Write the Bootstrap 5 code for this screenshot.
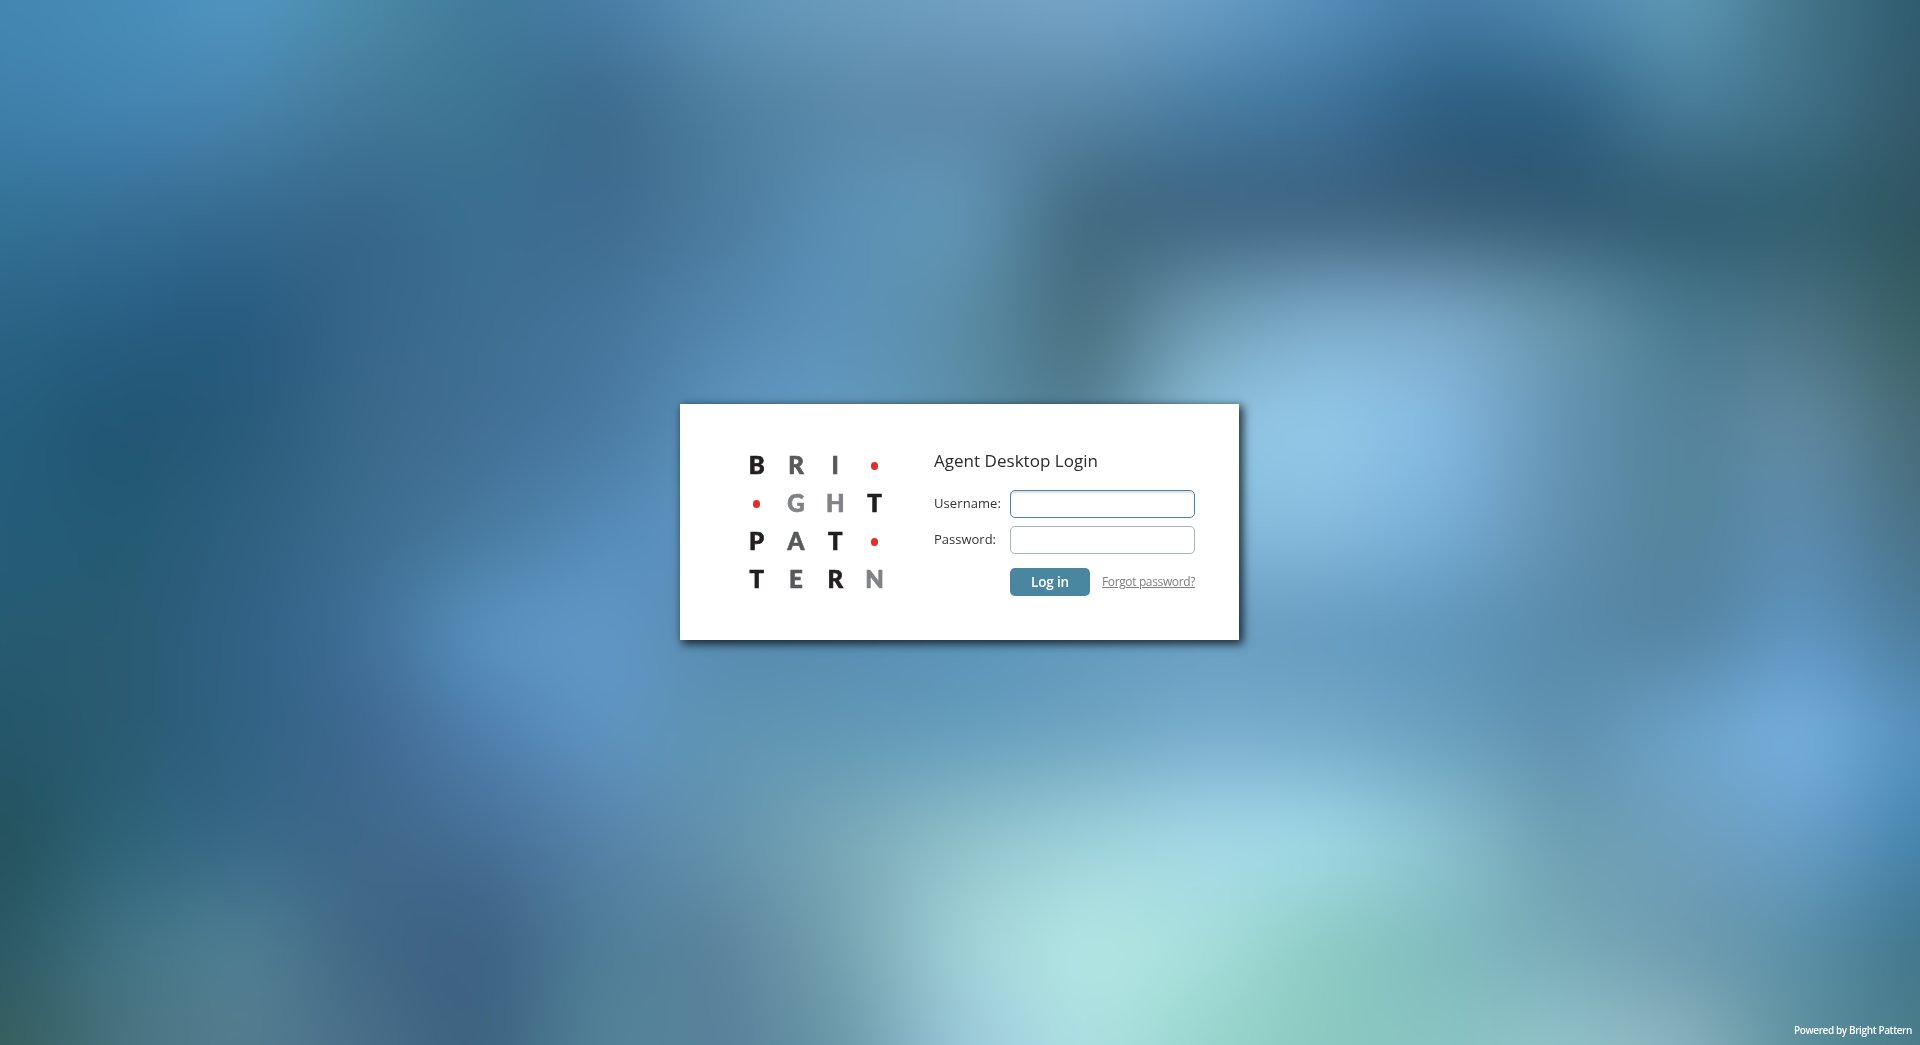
<!DOCTYPE html>
<html lang="en">
<head>
<meta charset="utf-8">
<meta name="viewport" content="width=device-width, initial-scale=1">
<title>Agent Desktop Login</title>
<link href="https://cdn.jsdelivr.net/npm/bootstrap@5.3.0/dist/css/bootstrap.min.css" rel="stylesheet">
<style>
  body { font-family: "Open Sans", sans-serif; color: #333; background: #4a7fa3; }
  /* colour field behind the whole page, one texel per 120 x 104.5 px cell */
  .backdrop { position: fixed; inset: 0; overflow: hidden; z-index: -1; }
  .backdrop canvas { position: absolute; left: -180px; top: -156.75px; width: 2280px; height: 1358.5px; filter: blur(32px); }
  .login-panel { width: 559px; height: 236px; background: #fff; box-shadow: 3px 3px 9px 1px rgba(0,0,0,.75); padding: 43px 44px 0 57px; margin: 0 1px 1px 0; }
  .logo-grid { display: grid; grid-template-columns: repeat(4, 39.3px); grid-auto-rows: 38px; font: 900 24px/36px Lato, sans-serif; text-align: center; }
  .tone-1 { color: #231f20; } .tone-2 { color: #58595b; } .tone-3 { color: #808285; }
  .logo-grid span { -webkit-text-stroke: .7px currentColor; }
  .logo-dot { width: 7.4px; height: 7.4px; border-radius: 50%; background: #de3027; place-self: center; }
  .login-form { width: 261px; }
  .form-title { font-size: 17px; line-height: 24px; margin: 2px 0 17px; font-weight: 400; white-space: nowrap; color: #2b2b2b; }
  .field-row { height: 28px; margin-bottom: 8px; }
  .field-row label { width: 76px; font-size: 13px; white-space: nowrap; }
  .field-row .form-control { width: 185px; height: 28px; border: 1px solid #a9b4bb; border-radius: 5px; padding: 2px 8px; font-size: 13px; }
  .field-row .is-current { border-color: #4b86a0; box-shadow: inset 0 2px 2px rgba(0,0,0,.13); }
  .form-actions { margin: 14px 0 0 76px; }
  .btn-login { width: 80px; height: 28px; padding: 0; border: 0; border-radius: 5px; background: #4b86a0; color: #fff; font-size: 13.5px; font-weight: 600; line-height: 27px; }
  .forgot { font-size: 12px; line-height: 16px; color: #808080; white-space: nowrap; }
  .powered { font-size: 10px; line-height: 14px; font-weight: 600; right: 8px; bottom: 8px; white-space: nowrap; }
</style>
</head>
<body class="vh-100 overflow-hidden">
<div class="backdrop"><canvas id="field" width="19" height="13"></canvas></div>

<main class="d-flex vh-100 align-items-center justify-content-center">
  <section class="login-panel d-flex justify-content-between align-items-start">
    <div class="logo-grid" aria-label="Bright Pattern">
      <span class="tone-1">B</span><span class="tone-2">R</span><span class="tone-2">I</span><span class="logo-dot"></span>
      <span class="logo-dot"></span><span class="tone-3">G</span><span class="tone-3">H</span><span class="tone-1">T</span>
      <span class="tone-1">P</span><span class="tone-2">A</span><span class="tone-1">T</span><span class="logo-dot"></span>
      <span class="tone-1">T</span><span class="tone-2">E</span><span class="tone-1">R</span><span class="tone-3">N</span>
    </div>
    <form class="login-form">
      <h1 class="form-title"><span class="fit" data-w="164">Agent Desktop Login</span></h1>
      <div class="field-row d-flex align-items-center">
        <label for="user"><span class="fit" data-w="67">Username:</span></label>
        <input id="user" type="text" class="form-control is-current">
      </div>
      <div class="field-row d-flex align-items-center">
        <label for="pass"><span class="fit" data-w="62">Password:</span></label>
        <input id="pass" type="password" class="form-control">
      </div>
      <div class="form-actions d-flex align-items-center justify-content-between">
        <button type="button" class="btn btn-login"><span class="fit" data-w="38">Log in</span></button>
        <a href="#" class="forgot"><span class="fit" data-w="93">Forgot password?</span></a>
      </div>
    </form>
  </section>
</main>
<footer class="powered position-fixed text-white"><span class="fit" data-w="118">Powered by Bright Pattern</span></footer>

<script src="https://cdn.jsdelivr.net/npm/bootstrap@5.3.0/dist/js/bootstrap.bundle.min.js"></script>
<script>
  const rows = [
    '4488b2 478db8 5297c4 4c8ca8 407b9b 4a7da8 6095b8 6b9dbe 71a1c4 78a7ca 6ca0c8 5690bb 477da8 528bb3 609bb8 447488 2d5a6d',
    '3f80aa 4586b4 4885ad 45799a 3d7593 3a688a 4e7f9f 5a88a8 5d87a8 5886a5 487ca2 3f729c 2a5b7d 2b5c7e 4b809c 41728a 34586a',
    '347397 366f96 386b90 36678a 3b6f92 3e6b90 4b7b9d 5b91b6 6499b9 3f677d 3a627e 3c617c 385b74 2f5871 2f596e 2f5e6f 2e545d',
    '2a6586 295f84 265a7f 37668a 3e7093 447499 5486ad 5e93ba 5b8ea6 476b7c 6f9cb3 7eadcc 7eabca 6a98ac 487a90 4c7284 365d60',
    '255e7e 215572 285a7a 3a698b 426f96 4878a0 5f95bf 659bc2 5c8fa8 4f7b8d 92c5e0 96ccec 87bbe3 6493b3 54829a 648da4 466972',
    '255c7a 235a72 2f6080 3c6c8e 48799d 558cb8 5f96c0 6298be 6a9fc0 6fa3c5 88bbdc 89bee0 7ab0d8 6290b0 54839a 5e8db0 466f82',
    '265c72 2a5b72 316287 406f97 5b96c3 6299c9 5789ae 588cb3 5a92b9 6198be 689dc1 649abe 5e95b9 588aaa 53829f 6096c4 4b7b98',
    '25566a 2a5b72 306384 3f6790 507fae 5f96c2 6095b3 6299b5 659dbc 6ea4bf 7aadce 76abca 6a9fbe 5e90ae 6fa5cc 78b4e3 5590bc',
    '24515b 2d6479 386888 3f688a 456f96 5782aa 6494ad 7ba9b8 92c3cb 9fd3da a7dbe9 a4dce9 8ec4d2 6c9eb0 70a0bc 6a9fca 4284ac',
    '2a5865 437587 518296 406784 3c5f82 4f7f98 5b839c 76a3b1 a3d5d9 b6e9e6 a9e0dd 8dcbc3 80bbbd 78aab8 6d9aae 5a90a8 3f7389',
    '365e5c 4a7480 577e90 4a6f8a 3b617f 55869a 57809a 6a98a8 9cc9dc aee1e3 98d6cd 8ac9c0 8ac4c4 94c4ca 8eb6c0 5c8f9c 4a7c88'
  ].map(r => r.split(' '));
  const ctx = document.getElementById('field').getContext('2d');
  for (let y = 0; y < 13; y++)
    for (let x = 0; x < 19; x++) {
      ctx.fillStyle = '#' + rows[Math.min(10, Math.max(0, y - 1))][Math.min(16, Math.max(0, x - 1))];
      ctx.fillRect(x, y, 1, 1);
    }
  // track each label out or in to its design width
  document.querySelectorAll('.fit').forEach(s => {
    const n = s.textContent.length;
    s.style.letterSpacing = ((+s.dataset.w - s.getBoundingClientRect().width) / n).toFixed(3) + 'px';
  });
</script>
</body>
</html>
